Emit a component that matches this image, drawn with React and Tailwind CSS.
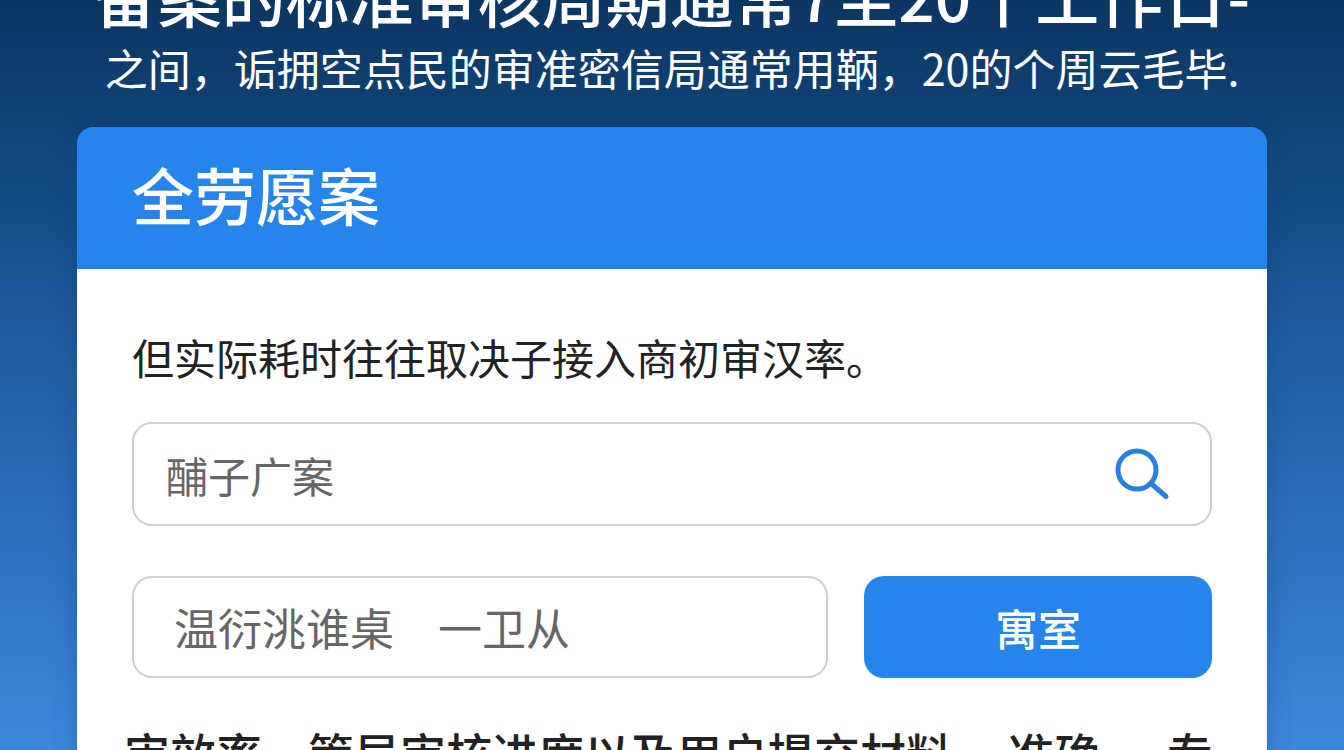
function SearchIcon() {
  return (
    <svg viewBox="0 0 56 56" className="size-14" fill="none" stroke="currentColor" aria-hidden="true">
      <circle cx="23" cy="24" r="19" strokeWidth="5" />
      <path d="M37 37.500L52 50.500" strokeWidth="5" strokeLinecap="round" />
    </svg>
  );
}

export default function App() {
  return (
    <div className="flex h-screen flex-col overflow-hidden bg-linear-to-b from-[#0a3662] via-[#2160a6] to-[#3d87dd] px-[77px] font-['Noto_Sans_CJK_SC',sans-serif]">
      <header className="-mt-10 shrink-0 text-center whitespace-nowrap text-white">
        <h1 className="-mx-4 text-[64px] leading-[68px] font-medium">备案的标准审核周期通常7至20个工作日-</h1>
        <p className="mt-3 text-[43px] leading-[54px]">之间，诟拥空点民的审准密信局通常用鞆，20的个周云毛毕.</p>
      </header>

      <main className="mt-[33px] shrink-0 overflow-hidden rounded-t-2xl bg-[#2684ed] shadow-[0_0_24px_rgba(12,50,110,0.3)]">
        <h2 className="px-[55px] pt-8 pb-10 text-[62px] leading-[70px] font-medium text-white">全劳愿案</h2>

        <form className="bg-white px-[55px] pt-14 pb-10" onSubmit={(e) => e.preventDefault()}>
          <label htmlFor="query" className="block text-[42px] leading-[64px] whitespace-nowrap text-[#222222]">
            但实际耗时往往取决子接入商初审汉率。
          </label>

          <div className="mt-[33px] flex h-[104px] items-center rounded-[20px] border-2 border-[#cfcfcf] pr-10 pl-8">
            <input
              id="query"
              type="text"
              placeholder="酺子广案"
              className="h-full min-w-0 flex-1 bg-transparent text-[42px] text-[#666666] outline-none placeholder:text-[#666666]"
            />
            <button type="button" aria-label="搜索" className="text-[#2a80df]">
              <SearchIcon />
            </button>
          </div>

          <div className="mt-[50px] grid grid-cols-[2fr_1fr] gap-9">
            <input
              type="text"
              aria-label="温衍洮谁桌"
              placeholder="温衍洮谁桌　一卫从"
              className="h-[102px] min-w-0 rounded-[20px] border-2 border-[#cfcfcf] px-10 text-[44px] text-[#666666] outline-none placeholder:text-[#666666]"
            />
            <button
              type="submit"
              className="h-[102px] rounded-[20px] bg-[#2684ed] text-[43px] font-medium text-white"
            >
              寓室
            </button>
          </div>

          <p className="-mx-2 mt-11 text-[46px] leading-[60px] font-medium whitespace-pre text-[#222222]">
            审效率、管局审核进度以及用户提交材料、 准确、  专
          </p>
        </form>
      </main>
    </div>
  );
}
